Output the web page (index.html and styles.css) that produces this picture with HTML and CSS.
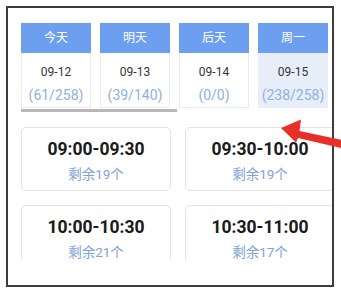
FILE: index.html
```html
<!DOCTYPE html>
<html lang="zh">
<head>
<meta charset="utf-8">
<link rel="stylesheet" href="styles.css">
</head>
<body>
<div class="frame">
  <div class="tabs">
    <div class="tab">
      <div class="tab-head">今天</div>
      <div class="tab-body"><div class="date">09-12</div><div class="count">(61/258)</div></div>
    </div>
    <div class="tab">
      <div class="tab-head">明天</div>
      <div class="tab-body"><div class="date">09-13</div><div class="count">(39/140)</div></div>
    </div>
    <div class="tab">
      <div class="tab-head">后天</div>
      <div class="tab-body"><div class="date">09-14</div><div class="count">(0/0)</div></div>
    </div>
    <div class="tab active">
      <div class="tab-head">周一</div>
      <div class="tab-body"><div class="date">09-15</div><div class="count">(238/258)</div></div>
    </div>
  </div>
  <div class="scrollbar"></div>
  <div class="slots">
    <div class="slot"><div class="time">09:00-09:30</div><div class="left">剩余19个</div></div>
    <div class="slot"><div class="time">09:30-10:00</div><div class="left">剩余19个</div></div>
    <div class="slot"><div class="time">10:00-10:30</div><div class="left">剩余21个</div></div>
    <div class="slot"><div class="time">10:30-11:00</div><div class="left">剩余17个</div></div>
  </div>
</div>
<svg class="arrow" width="71" height="50" viewBox="270 110 71 50">
  <polygon points="281,128 301,119.5 299.5,131 342,140 341,148 298,138 296,142.5" fill="#e8302b"/>
</svg>
</body>
</html>
```
FILE: styles.css
```css
* { box-sizing: border-box; }
body {
  margin: 0;
  background: #fff;
  font-family: Roboto, "Noto Sans CJK SC", sans-serif;
  width: 341px;
  height: 292px;
  overflow: hidden;
  position: relative;
}
.frame {
  margin: 6px 0 0 6px;
  width: 328px;
  height: 281px;
  border: 2px solid #3c3c3c;
  padding: 15px 0 0 13px;
  overflow: hidden;
  background: #fff;
}
.tabs {
  display: flex;
  gap: 9px;
}
.tab {
  width: 70px;
  flex: none;
}
.tab-head {
  height: 30px;
  background: #6d9ff0;
  color: #fff;
  font-size: 12px;
  line-height: 30px;
  text-align: center;
}
.tab-body {
  height: 55px;
  border: 1px solid #ececec;
  border-top: none;
  text-align: center;
  padding-top: 10px;
}
.tab.active .tab-body {
  background: #e7eef9;
  border-color: #e7eef9;
}
.date {
  font-size: 12px;
  line-height: 18px;
  color: #333;
}
.count {
  font-size: 14px;
  line-height: 20px;
  margin-top: 4px;
  color: #8eb1e3;
}
.scrollbar {
  width: 156px;
  height: 3px;
  background: #b8b8b8;
  margin-top: 1px;
}
.slots {
  margin-top: 15px;
  display: grid;
  grid-template-columns: 150px 150px;
  column-gap: 14px;
  row-gap: 14px;
  height: 132px;
  overflow: hidden;
}
.slot {
  height: 64px;
  border: 1px solid #e2e2e2;
  border-radius: 5px;
  text-align: center;
  padding-top: 11px;
}
.time {
  font-size: 17.5px;
  font-weight: bold;
  line-height: 20px;
  color: #1a1a1a;
}
.left {
  font-size: 13.5px;
  line-height: 16px;
  margin-top: 7px;
  color: #7ea3d8;
}
.arrow {
  position: absolute;
  left: 270px;
  top: 110px;
}
```
